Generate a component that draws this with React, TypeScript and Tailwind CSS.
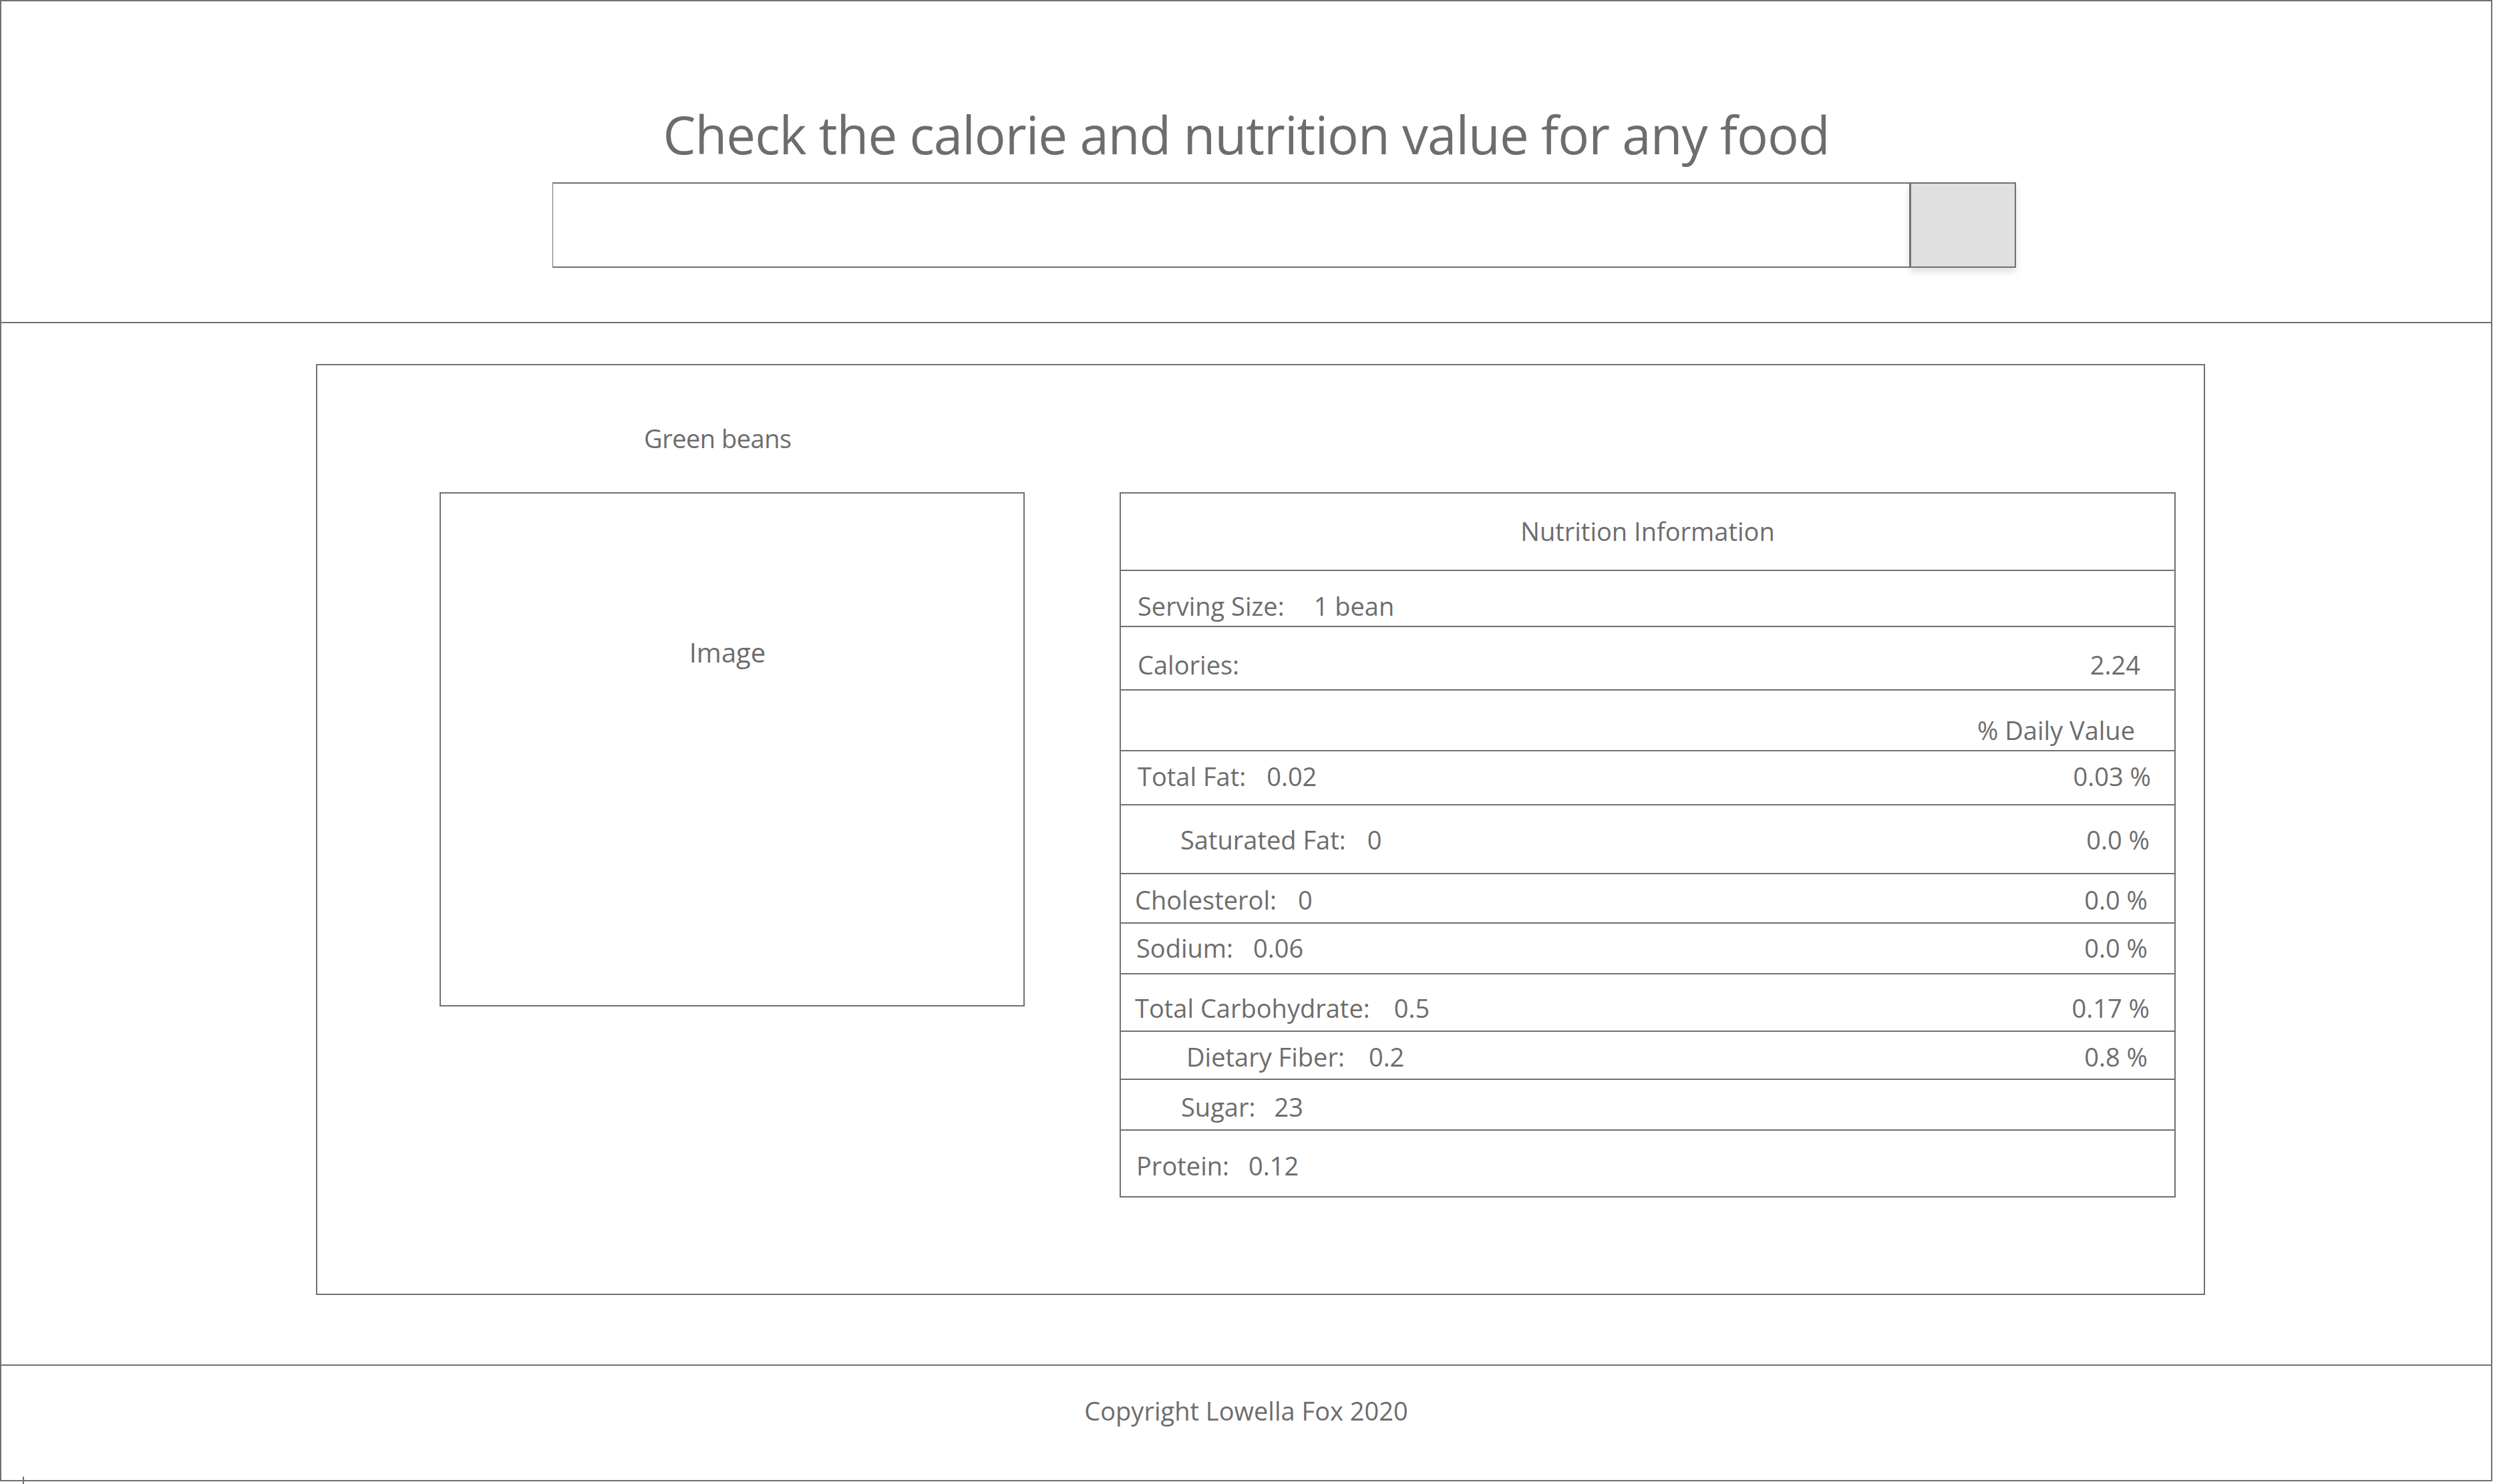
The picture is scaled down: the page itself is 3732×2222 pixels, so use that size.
import React from "react";

type Row = {
  label?: string;
  value?: string;
  right?: string;
  rowClass: string;
  gapClass?: string;
  rightClass?: string;
};

const rows: Row[] = [
  { label: "Serving Size:", value: "1 bean", rowClass: "h-[84px] pt-[33px] pl-[25px]", gapClass: "ml-[44px]" },
  { label: "Calories:", right: "2.24", rowClass: "h-[95px] pt-[37px] pl-[25px]", rightClass: "pr-[51px]" },
  { right: "% Daily Value", rowClass: "h-[91px] pt-[40px] pl-[25px]", rightClass: "pr-[59px]" },
  { label: "Total Fat:", value: "0.02", right: "0.03 %", rowClass: "h-[81px] pt-[18px] pl-[25px]", gapClass: "ml-[31px]", rightClass: "pr-[35px]" },
  { label: "Saturated Fat:", value: "0", right: "0.0 %", rowClass: "h-[103px] pt-[32px] pl-[89px]", gapClass: "ml-[32px]", rightClass: "pr-[37px]" },
  { label: "Cholesterol:", value: "0", right: "0.0 %", rowClass: "h-[74px] pt-[19px] pl-[21px]", gapClass: "ml-[32px]", rightClass: "pr-[40px]" },
  { label: "Sodium:", value: "0.06", right: "0.0 %", rowClass: "h-[76px] pt-[17px] pl-[23px]", gapClass: "ml-[30px]", rightClass: "pr-[40px]" },
  { label: "Total Carbohydrate:", value: "0.5", right: "0.17 %", rowClass: "h-[86px] pt-[31px] pl-[21px]", gapClass: "ml-[36px]", rightClass: "pr-[37px]" },
  { label: "Dietary Fiber:", value: "0.2", right: "0.8 %", rowClass: "h-[72px] pt-[18px] pl-[98px]", gapClass: "ml-[36px]", rightClass: "pr-[40px]" },
  { label: "Sugar:", value: "23", rowClass: "h-[76px] pt-[21px] pl-[90px]", gapClass: "ml-[28px]" },
  { label: "Protein:", value: "0.12", rowClass: "h-[98px] pt-[33px] pl-[23px]", gapClass: "ml-[29px]" },
];

const NutritionTable = () => (
  <div className="w-[1581px] border-2 border-[#707070] flex flex-col">
    <div className="h-[116px] pt-[37px] border-b-2 border-[#707070] text-center leading-none">
      Nutrition Information
    </div>
    {rows.map((r, i) => (
      <div
        key={i}
        className={`flex justify-between leading-none whitespace-nowrap ${r.rowClass} ${
          i < rows.length - 1 ? "border-b-2 border-[#707070]" : ""
        }`}
      >
        <div>
          {r.label && <span>{r.label}</span>}
          {r.value && <span className={r.gapClass}>{r.value}</span>}
        </div>
        {r.right && <div className={r.rightClass}>{r.right}</div>}
      </div>
    ))}
  </div>
);

export default function App() {
  return (
    <div className="w-[3732px] h-[2222px] bg-white font-['Open_Sans',sans-serif] text-[#6d6d6d] relative">
      <div className="w-[3731px] h-[2218px] border-2 border-[#707070] flex flex-col">
        {/* header with search */}
        <header className="h-[482px] border-b-2 border-[#707070] pt-[151px] flex flex-col">
          <h1 className="text-[78px] leading-[97px] tracking-[-1px] text-center">
            Check the calorie and nutrition value for any food
          </h1>
          <div className="mt-[23px] ml-[825px] flex h-[128px]">
            <input
              type="text"
              className="w-[2031px] h-full border-y-2 border-l border-[#707070] outline-none"
            />
            <button className="w-[160px] h-full bg-[#e0e0e0] border-y-2 border-l-[3px] border-r-2 border-[#707070] shadow-[0_6px_10px_rgba(0,0,0,0.12)]" />
          </div>
        </header>

        {/* result card */}
        <main className="flex-1 pt-[61px] pl-[471px]">
          <div className="w-[2828px] h-[1394px] border-2 border-[#707070] pt-[90px]">
            <div className="pl-[489px] text-[38px] tracking-[-0.5px] leading-none">Green beans</div>
            <div className="flex mt-[62px] pl-[183px] gap-[142px] text-[38px]">
              <div className="w-[876px] h-[770px] border-2 border-[#707070] pt-[218px] pr-[14px] text-center text-[40px] leading-none">
                Image
              </div>
              <NutritionTable />
            </div>
          </div>
        </main>

        <footer className="h-[173px] border-t-2 border-[#707070] pt-[44px] text-center text-[38px] leading-[47px]">
          Copyright Lowella Fox 2020
        </footer>
      </div>
      <div className="absolute left-[34px] top-[2211px] w-[2px] h-[11px] bg-[#707070]" />
    </div>
  );
}
